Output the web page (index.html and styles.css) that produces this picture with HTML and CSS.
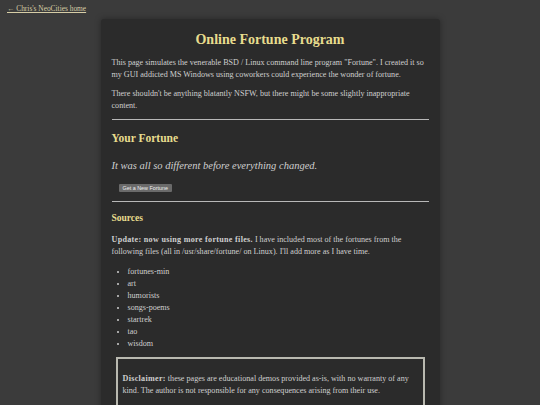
FILE: index.html
```html
<!DOCTYPE html>
<html lang="en">
<head>
<meta charset="utf-8">
<title>Online Fortune Program</title>
<link rel="stylesheet" href="styles.css">
</head>
<body>
<nav class="top-nav"><a class="home-link" href="#">&larr; Chris's NeoCities home</a></nav>
<main class="card">
  <h1 class="title">Online Fortune Program</h1>
  <p>This page simulates the venerable BSD / Linux command line program "Fortune". I created it so my GUI addicted MS Windows using coworkers could experience the wonder of fortune.</p>
  <p>There shouldn't be anything blatantly NSFW, but there might be some slightly inappropriate content.</p>
  <hr class="rule">
  <h2 class="section-title">Your Fortune</h2>
  <p class="fortune">It was all so different before everything changed.</p>
  <div class="actions"><button class="btn" type="button">Get a New Fortune</button></div>
  <hr class="rule rule-after">
  <h3 class="sub-title">Sources</h3>
  <p><strong>Update: now using more fortune files.</strong> I have included most of the fortunes from the following files (all in /usr/share/fortune/ on Linux). I'll add more as I have time.</p>
  <ul class="sources">
    <li>fortunes-min</li>
    <li>art</li>
    <li>humorists</li>
    <li>songs-poems</li>
    <li>startrek</li>
    <li>tao</li>
    <li>wisdom</li>
  </ul>
  <div class="disclaimer">
    <p><strong>Disclaimer:</strong> these pages are educational demos provided as-is, with no warranty of any kind. The author is not responsible for any consequences arising from their use.</p>
  </div>
</main>
</body>
</html>
```
FILE: styles.css
```css
html, body {
  margin: 0;
  padding: 0;
}
body {
  background: #3b3b3b;
  color: #cfcfcf;
  font-family: "Liberation Serif", "Times New Roman", serif;
  font-size: 8.1px;
  line-height: 12px;
  padding: 3px 0 40px;
}
.top-nav {
  padding-left: 7px;
  height: 16px;
}
.home-link {
  color: #d6cda6;
  font-size: 7.4px;
}
.card {
  width: 317px;
  margin: 0 auto;
  background: #2b2b2b;
  border-radius: 3px;
  box-shadow: 0 0 6px rgba(0,0,0,0.35);
  padding: 10px 11px 20px;
}
.card p {
  margin: 0 0 7px;
}
.card strong {
  letter-spacing: 0.3px;
}
.title {
  color: #e8dd8e;
  text-align: center;
  font-size: 14px;
  line-height: 18px;
  margin: 2px 0 8px;
}
.rule {
  border: 0;
  border-top: 1px solid #b8b8b8;
  margin: 7px 0 10px;
}
.rule-after {
  margin-top: 7px;
}
.section-title {
  color: #e8dd8e;
  font-size: 11.5px;
  line-height: 16px;
  margin: 0 0 13px;
}
.fortune {
  font-style: italic;
  font-size: 10.5px;
  line-height: 14px;
}
.card p.fortune {
  margin: 0 0 9px;
}
.actions {
  padding-left: 7px;
}
.btn {
  background: #6a6a6a;
  color: #eeeeee;
  border: 0;
  font-family: "Liberation Sans", Arial, sans-serif;
  font-size: 5.4px;
  line-height: 8px;
  height: 8px;
  padding: 0 4px;
  border-radius: 1px;
}
.sub-title {
  color: #e8dd8e;
  font-size: 9.5px;
  line-height: 12px;
  margin: 0 0 10px;
}
.sources {
  margin: 8px 0 7px;
  padding-left: 16px;
}
.disclaimer {
  margin: 0 4px;
  border: 2px solid #b9b9b0;
  padding: 14px 5px;
}
.card .disclaimer p {
  margin: 0;
}
```
